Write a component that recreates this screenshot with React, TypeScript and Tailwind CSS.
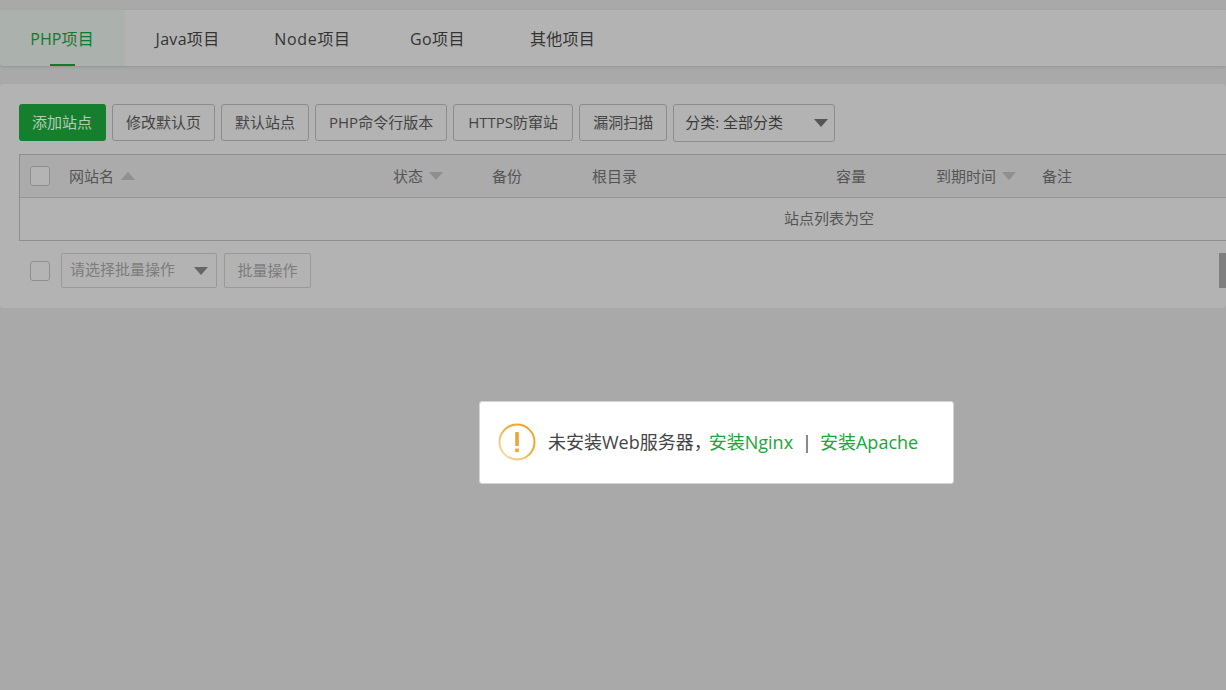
const font = { fontFamily: '"Open Sans", "Noto Sans CJK SC", "Liberation Sans", sans-serif' };

function Caret({ dir, color }: { dir: "up" | "down"; color: string }) {
  return (
    <svg width="14" height="8" viewBox="0 0 14 8" className="shrink-0">
      <polygon points={dir === "up" ? "0,8 14,8 7,0" : "0,0 14,0 7,8"} fill={color} />
    </svg>
  );
}

const tabs = [
  { t: "PHP项目", c: "tracking-[0.1px]" },
  { t: "Java项目", c: "tracking-[0.3px]" },
  { t: "Node项目", c: "tracking-[0.7px]" },
  { t: "Go项目", c: "tracking-[0.4px]" },
  { t: "其他项目", c: "tracking-[0.2px]" },
];

const buttons = [
  { t: "修改默认页", c: "px-[13px]" },
  { t: "默认站点", c: "px-[13px]" },
  { t: "PHP命令行版本", c: "px-[13px]" },
  { t: "HTTPS防窜站", c: "w-[120px]" },
  { t: "漏洞扫描", c: "px-[13px]" },
];

function Check() {
  return <span className="block w-[20px] h-[20px] rounded-[3px] border border-[#8f8f8f] bg-[#b4b4b4] shrink-0" />;
}

export default function App() {
  return (
    <div style={font} className="relative w-[1226px] h-[690px] overflow-hidden bg-[#a9a9a9] pt-[10px]">
      <div className="flex h-[56px] bg-[#b3b3b3] rounded-bl-[4px] shadow-[0_1px_3px_rgba(0,0,0,0.12)]">
        {tabs.map((x, i) => (
          <div
            key={x.t}
            className={`relative w-[125px] h-full flex items-center justify-center pt-[1px] text-[16px] ${x.c} ${
              i === 0 ? "bg-[#abb1ac] text-[#127a2a] rounded-bl-[4px] pr-[1px]" : "text-[#333333]"
            }`}
          >
            {x.t}
            {i === 0 && <span className="absolute bottom-0 left-[50px] w-[25px] h-[2px] bg-[#127a2a]" />}
          </div>
        ))}
      </div>

      <div className="relative mt-[18px] h-[224px] bg-[#b3b3b3] rounded-[4px] pl-[19px] pt-[20px] text-[15px]">
        <div className="flex items-start gap-[6px] h-[38px]">
          <button className="h-[37px] w-[87px] rounded-[3px] bg-[#167f2e] text-[#b5ccb9] flex items-center justify-center pr-[1px]">
            添加站点
          </button>
          {buttons.map((b) => (
            <button
              key={b.t}
              className={`h-[37px] ${b.c} rounded-[3px] border border-[#8c8c8c] bg-[#b3b3b3] text-[#444444] flex items-center justify-center whitespace-nowrap`}
            >
              {b.t}
            </button>
          ))}
          <div className="h-[38px] w-[162px] rounded-[3px] border border-[#8c8c8c] flex items-center justify-between pl-[11px] pr-[6px] pb-[1px] text-[#3a3a3a]">
            <span>分类: 全部分类</span>
            <Caret dir="down" color="#555555" />
          </div>
        </div>

        <div className="mt-[12px] w-[1207px] border border-r-0 border-[#8e8e8e] text-[#555555]">
          <div className="flex items-center h-[43px] bg-[#ababab] border-b border-[#969696]">
            <div className="w-[49px] pl-[10px]"><Check /></div>
            <div className="w-[324px] flex items-center gap-[7px]">网站名 <Caret dir="up" color="#8f8f8f" /></div>
            <div className="w-[99px] flex items-center gap-[6px]">状态 <Caret dir="down" color="#8f8f8f" /></div>
            <div className="w-[100px]">备份</div>
            <div className="w-[244px]">根目录</div>
            <div className="w-[100px]">容量</div>
            <div className="w-[106px] flex items-center gap-[6px]">到期时间 <Caret dir="down" color="#8f8f8f" /></div>
            <div>备注</div>
          </div>
          <div className="h-[42px] flex items-center pl-[764px] pb-[1px]">
            站点列表为空
          </div>
        </div>

        <div className="mt-[12px] flex items-center pl-[11px]">
          <Check />
          <div className="ml-[11px] w-[156px] h-[35px] rounded-[2px] border border-[#999999] flex items-center justify-between pl-[8px] pr-[8px] text-[#7c7c7c]">
            <span className="-mt-[2px]">请选择批量操作</span>
            <Caret dir="down" color="#666666" />
          </div>
          <button className="ml-[7px] w-[87px] h-[35px] rounded-[2px] border border-[#999999] text-[#7c7c7c]">
            批量操作
          </button>
        </div>

        <div className="absolute right-0 top-[169px] w-[7px] h-[35px] bg-[#7f7f7f]" />
      </div>

      <div className="absolute left-[479px] top-[401px] w-[475px] h-[83px] bg-white border border-[#d4d4d4] rounded-[3px] flex items-center pl-[19px]">
        <svg width="38" height="38" viewBox="0 0 38 38" className="shrink-0 -mt-[1px] -ml-[1px]">
          <defs>
            <linearGradient id="ring" x1="0" y1="1" x2="1" y2="0">
              <stop offset="0" stopColor="#fbe6c4" />
              <stop offset="0.5" stopColor="#f0ad3e" />
              <stop offset="1" stopColor="#eea026" />
            </linearGradient>
          </defs>
          <circle cx="19" cy="19" r="17.5" fill="none" stroke="url(#ring)" strokeWidth="2" />
          <rect x="17.2" y="9" width="3.6" height="14" rx="0.8" fill="#eea431" />
          <rect x="17.2" y="25.5" width="3.6" height="3.6" fill="#eea431" />
        </svg>
        <div className="ml-[12px] text-[18px] whitespace-nowrap text-[#444444] flex items-center">
          <span>未安装Web服务器，</span>
          <span className="text-[#20a53a] -ml-[3px]">安装Nginx</span>
          <span className="ml-[9px] mr-[8px] text-[#444444]">|</span>
          <span className="text-[#20a53a]">安装Apache</span>
        </div>
      </div>
    </div>
  );
}
